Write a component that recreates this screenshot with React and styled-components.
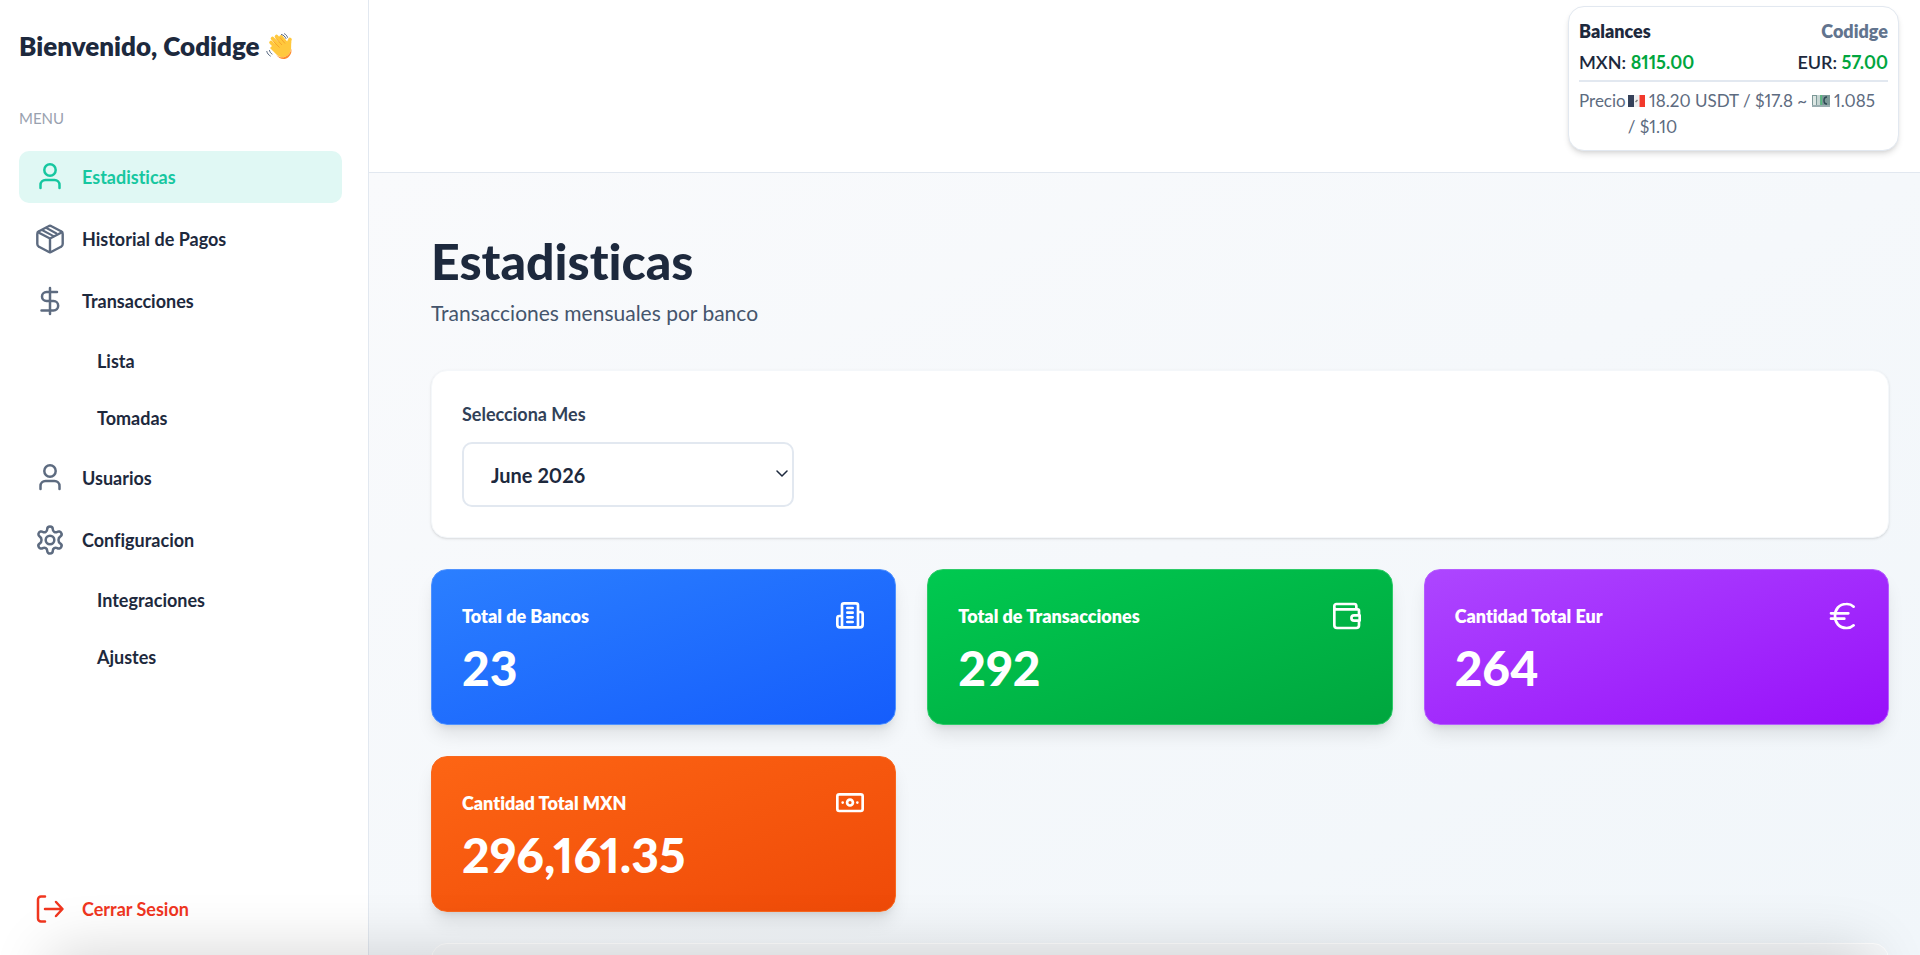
import React from "react";
import styled, { createGlobalStyle } from "styled-components";

const Global = createGlobalStyle`
  *, *::before, *::after { box-sizing: border-box; }
  body {
    margin: 0;
    font-family: Lato, "Liberation Sans", sans-serif;
    font-variant-ligatures: no-common-ligatures;
    font-variant-numeric: proportional-nums;
    color: #1d293d;
    background: #fff;
  }
  h1, h2, p, ul { margin: 0; padding: 0; }
  ul { list-style: none; }
  button, select { font-family: inherit; font-variant: inherit; }
`;

const Shell = styled.div`
  display: flex;
  height: 100vh;
  overflow: hidden;
`;

const Sidebar = styled.aside`
  flex: 0 0 369px;
  display: flex;
  flex-direction: column;
  padding: 24px 26px 20px 19px;
  border-right: 1px solid #e2e8f0;
  background: #fff;
`;

const Welcome = styled.h2`
  display: flex;
  align-items: center;
  gap: 6px;
  font-size: 26px;
  line-height: 44px;
  font-weight: 800;
  color: #1d293d;
  white-space: nowrap;
`;

const MenuTitle = styled.p`
  margin-top: 40px;
  font-size: 15px;
  line-height: 20px;
  color: #99a1af;
`;

const Nav = styled.nav`
  display: flex;
  flex: 1;
  flex-direction: column;
  margin-top: 23px;
`;

const NavList = styled.ul`
  display: flex;
  flex-direction: column;
  gap: 10px;
`;

const SubList = styled.ul`
  display: flex;
  flex-direction: column;
  gap: 9px;
  margin-top: 10px;
  padding-left: 62px;
`;

const NavLink = styled.a`
  display: flex;
  align-items: center;
  gap: 17px;
  height: 52px;
  padding: 0 16px;
  border-radius: 10px;
  font-size: 18px;
  line-height: 28px;
  font-weight: 700;
  text-decoration: none;
  color: ${(p) => (p.$active ? "#16c7a0" : "#1d293d")};
  background: ${(p) => (p.$active ? "#e0f8f4" : "transparent")};
  svg { color: ${(p) => (p.$active ? "#16c7a0" : "#5d6b80")}; }
`;

const SubLink = styled.a`
  display: block;
  padding: 10px 16px;
  font-size: 18px;
  line-height: 28px;
  font-weight: 700;
  text-decoration: none;
  color: #1d293d;
`;

const Logout = styled.button`
  display: flex;
  align-items: center;
  gap: 17px;
  height: 52px;
  margin-top: auto;
  padding: 0 16px;
  border: 0;
  background: none;
  font-size: 18px;
  line-height: 28px;
  font-weight: 700;
  color: #f0361f;
`;

const Column = styled.div`
  flex: 1;
  min-width: 0;
  display: flex;
  flex-direction: column;
`;

const Topbar = styled.header`
  display: flex;
  flex-shrink: 0;
  justify-content: flex-end;
  align-items: flex-start;
  height: 173px;
  padding: 6px 21px 0;
  border-bottom: 1px solid #e2e8f0;
  background: #fff;
`;

const BalanceCard = styled.section`
  width: 331px;
  padding: 11px 10px 10px;
  border: 1px solid #e2e8f0;
  border-radius: 16px;
  background: #fff;
  box-shadow: 0 4px 6px -1px rgba(0, 0, 0, 0.12), 0 2px 4px -2px rgba(0, 0, 0, 0.1);
  font-size: 18px;
  line-height: 26px;
`;

const BalanceRow = styled.div`
  display: flex;
  justify-content: space-between;
  padding-bottom: 5px;
  font-weight: ${(p) => (p.$strong ? 800 : 600)};
`;

const Owner = styled.span`
  font-weight: 800;
  color: #62748e;
`;

const Amount = styled.span`
  font-weight: 700;
  color: #00a63e;
`;

const Prices = styled.div`
  display: flex;
  gap: 2px;
  padding-top: 6px;
  border-top: 2px solid #e2e8f0;
  font-size: 17px;
  color: #5d6b80;
`;

const Unbroken = styled.span`
  white-space: nowrap;
`;

const Main = styled.main`
  flex: 1;
  min-height: 0;
  overflow: hidden;
  padding: 60px 31px 0 62px;
  background: linear-gradient(to bottom right, #f9fafc, #f1f6fa);
`;

const Title = styled.h1`
  font-size: 50px;
  line-height: 56px;
  font-weight: 900;
`;

const Subtitle = styled.p`
  margin-top: 8px;
  font-size: 21px;
  line-height: 32px;
  color: #45556c;
`;

const Panel = styled.section`
  margin-top: 41px;
  padding: 30px;
  border: 1px solid #f4f7fa;
  border-radius: 16px;
  background: #fff;
  box-shadow: 0 1px 3px rgba(0, 0, 0, 0.1), 0 1px 2px -1px rgba(0, 0, 0, 0.1);
`;

const FieldLabel = styled.label`
  display: block;
  font-size: 18px;
  line-height: 26px;
  font-weight: 700;
  color: #314158;
`;

const SelectWrap = styled.div`
  position: relative;
  width: 332px;
  margin-top: 15px;
  svg { position: absolute; right: 6px; top: 26px; pointer-events: none; }
`;

const Select = styled.select`
  appearance: none;
  display: block;
  width: 100%;
  height: 65px;
  padding: 0 27px;
  border: 2px solid #e2e8f0;
  border-radius: 10px;
  background: #fff;
  font-size: 20px;
  line-height: 28px;
  font-weight: 700;
  color: #1d293d;
`;

const Grid = styled.div`
  display: grid;
  grid-template-columns: repeat(3, minmax(0, 1fr));
  gap: 31px;
  margin-top: 31px;
`;

const StatCard = styled.article`
  padding: 30px 29px 28px 30px;
  border: 1px solid ${(p) => p.$edge};
  border-radius: 16px;
  background: linear-gradient(to bottom right, ${(p) => p.$from}, ${(p) => p.$to});
  box-shadow: 0 12px 18px -3px rgba(0, 0, 0, 0.1), 0 5px 7px -4px rgba(0, 0, 0, 0.1);
  color: #fff;
`;

const StatHead = styled.div`
  display: flex;
  justify-content: space-between;
  align-items: center;
  height: 32px;
  font-size: 18px;
  line-height: 26px;
  font-weight: 800;
`;

const StatValue = styled.p`
  margin-top: 8px;
  font-size: 48px;
  line-height: 56px;
  font-weight: 900;
`;

const NextPanel = styled.section`
  height: 80px;
  margin-top: 31px;
  border: 1px solid #fff;
  border-radius: 16px;
  background: #f5f7f9;
`;

const BottomFade = styled.div`
  position: fixed;
  left: 0;
  right: 0;
  bottom: 0;
  height: 80px;
  overflow: hidden;
  pointer-events: none;
  &::after {
    content: "";
    position: absolute;
    left: 70px;
    right: 70px;
    top: 96px;
    height: 60px;
    box-shadow: 0 0 60px 20px rgba(0, 0, 0, 0.16);
  }
`;

function Line({ size = 32, width = 2, box = 24, children }) {
  return (
    <svg width={size} height={size} viewBox={`0 0 ${box} ${box}`} fill="none" stroke="currentColor" strokeWidth={width} strokeLinecap="round" strokeLinejoin="round" aria-hidden="true">
      {children}
    </svg>
  );
}

const UserIcon = () => (
  <Line size={30} box={30} width={2.5}>
    <circle cx="15" cy="8" r="5.7" />
    <path d="M5.500 26v-3a5 5 0 0 1 5-5h9a5 5 0 0 1 5 5v3" />
  </Line>
);
const BoxIcon = () => (
  <Line size={30} box={30} width={2.4}>
    <path d="M13.500 2.200 4 7.200a3 3 0 0 0-1.700 2.700v10.200a3 3 0 0 0 1.700 2.700l9.500 5a3 3 0 0 0 3 0l9.500-5a3 3 0 0 0 1.700-2.700V9.900A3 3 0 0 0 26 7.200l-9.500-5a3 3 0 0 0-3 0Z" />
    <path d="m3 8.200 12 6.300 12-6.300M15 14.500V28" />
    <path d="m7 6 11.500 6.200M11.500 4l10 5.500" strokeWidth="2" />
  </Line>
);
const DollarIcon = () => (
  <Line size={30} box={30} width={2.5}>
    <path d="M15 2v26M22 6h-10.500a4.500 4.500 0 0 0 0 9h7a4.700 4.700 0 0 1 0 9.400H6.500" />
  </Line>
);
const GearIcon = () => (
  <Line size={30} box={30} width={2.5}>
    <circle cx="15" cy="15" r="4.300" />
    <path d="M12.200 4.200a2.800 2.800 0 0 1 5.600 0c0 2.500 2.300 3.900 4.500 2.700a2.800 2.800 0 0 1 3.900 1c.8 1.300.3 2.900-1 3.700-2.300 1.500-2.300 5.300 0 6.800 1.300.8 1.800 2.400 1 3.700a2.800 2.800 0 0 1-3.900 1c-2.200-1.200-4.500.2-4.500 2.700a2.800 2.800 0 0 1-5.600 0c0-2.500-2.300-3.900-4.500-2.700a2.800 2.800 0 0 1-3.900-1c-.8-1.300-.3-2.900 1-3.700 2.300-1.500 2.300-5.300 0-6.800-1.300-.8-1.800-2.400-1-3.700a2.800 2.800 0 0 1 3.900-1c2.200 1.200 4.500-.2 4.500-2.700Z" />
  </Line>
);
const LogoutIcon = () => (
  <Line size={30} box={30} width={2.5}>
    <path d="M10 2.500H6a3 3 0 0 0-3 3v19a3 3 0 0 0 3 3h4M10 15h17M21 8l6.500 7-6.500 7" />
  </Line>
);
const BuildingIcon = () => (
  <Line>
    <path d="M6 20.500V4a1.500 1.500 0 0 1 1.500-1.500h9A1.500 1.500 0 0 1 18 4v16.500M6 12H4a1.500 1.500 0 0 0-1.500 1.500v5A2 2 0 0 0 4.500 20.500h15a2 2 0 0 0 2-2v-8a1.500 1.500 0 0 0-1.500-1.500h-2M10 6h4M10 9.500h4M10 13h4M10 16.500h4" />
  </Line>
);
const WalletIcon = () => (
  <Line>
    <path d="M19 7V4.500A1.500 1.500 0 0 0 17.500 3H4a1.500 1.500 0 0 0-1.500 1.500V19a2 2 0 0 0 2 2H19a2 2 0 0 0 2-2v-3.500M2.500 5.500A1.500 1.500 0 0 0 4 7h16a1 1 0 0 1 1 1v3.500M21.500 11.500h-4.200a2 2 0 0 0 0 4h4.200Z" />
  </Line>
);
const EuroIcon = () => (
  <Line>
    <path d="M20 5a7.500 7.500 0 0 0-5.500-2C9 3 6 7 6 12s3 9 8.500 9a7.500 7.500 0 0 0 5.500-2M3 10h13M3 14h10" />
  </Line>
);
const CashIcon = () => (
  <Line>
    <rect x="2.500" y="5.500" width="19" height="12.500" rx="1.500" />
    <circle cx="12" cy="11.700" r="2.200" />
    <path d="M6.500 11.700h.01M17.500 11.700h.01" />
  </Line>
);

const WaveHand = () => (
  <svg width="27" height="27" viewBox="0 0 27 27" aria-hidden="true">
    <g fill="none" stroke="#ffc83d" strokeWidth="3.600" strokeLinecap="round">
      <path d="m5 9.500 8 8M6.500 5.500l9 9M10.500 3.500l8.500 9.500M15 4l5 6" />
      <path d="M21.500 14c.5-3 1-5 2.500-7.500" />
    </g>
    <path d="M9 10 17 7l5 6 1.500-5 2 .5c-1 4 1 9-3 13-4 4-9 3-12 0l-6.500-6.500 2-2Z" fill="#ffc83d" />
    <path d="M10 21.500c4 4 9 3.500 12.500 0 2-2 2.500-4 2.600-6 .9 3 0 6-2.500 8.500-4 3.500-9 2.500-12.600-2.500Z" fill="#ff8b2b" />
    <path d="m7.500 8.500 6 6M10 5.500l6 6.500M14 4.500l5 6" stroke="#f59a28" strokeWidth=".8" fill="none" />
    <path d="M15.500 1.500c2 .5 3.500 2 4.500 4M18.500.800c1.500.7 2.500 2 3 3.500M.800 18.500c.5 2 1.800 3.500 3.500 4.500M3.500 17.500c.3 1.500 1.200 2.700 2.500 3.500" stroke="#50617a" strokeWidth="1" fill="none" strokeLinecap="round" />
  </svg>
);

const FlagIcon = () => (
  <svg width="17" height="12" viewBox="0 0 17 12" role="img" aria-label="MX">
    <path d="M0 0h6v12H0z" fill="#35415a" />
    <path d="M6 0h5.500v12H6z" fill="#eef0f1" />
    <path d="M11.500 0H17v12h-5.500z" fill="#f2392c" />
    <path d="m7.500 7 2-2" stroke="#777" strokeWidth="1.500" />
  </svg>
);

const NoteIcon = () => (
  <svg width="18" height="12" viewBox="0 0 18 12" role="img" aria-label="EUR">
    <path d="M0 0h18v12H0z" fill="#7c9897" />
    <path d="M1 1h3v9H1z" fill="#dce6e3" />
    <path d="M5 0h3v11H5z" fill="#c7d6d3" />
    <path d="M8.500 0h1.500v12H8.500z" fill="#54bd7d" />
    <path d="M15 2c-4 0-4 7 0 7" fill="none" stroke="#2e4854" strokeWidth="1.500" />
    <path d="M0 11h18" stroke="#9aadb0" strokeWidth="2" />
  </svg>
);

const menu = [
  { label: "Estadisticas", Icon: UserIcon, active: true },
  { label: "Historial de Pagos", Icon: BoxIcon },
  { label: "Transacciones", Icon: DollarIcon, items: ["Lista", "Tomadas"] },
  { label: "Usuarios", Icon: UserIcon },
  { label: "Configuracion", Icon: GearIcon, items: ["Integraciones", "Ajustes"] },
];

const stats = [
  { label: "Total de Bancos", value: "23", Icon: BuildingIcon, from: "#2b7fff", to: "#155dfc", edge: "#4f92ff" },
  { label: "Total de Transacciones", value: "292", Icon: WalletIcon, from: "#00c950", to: "#00a63e", edge: "#2dcb68" },
  { label: "Cantidad Total Eur", value: "264", Icon: EuroIcon, from: "#ad46ff", to: "#9810fa", edge: "#b55cff" },
  { label: "Cantidad Total MXN", value: "296,161.35", Icon: CashIcon, from: "#fd6514", to: "#ef4a08", edge: "#f9681f" },
];

export default function App() {
  return (
    <>
      <Global />
      <Shell>
        <Sidebar>
          <Welcome>
            <span>Bienvenido, Codidge</span>
            <WaveHand />
          </Welcome>
          <MenuTitle>MENU</MenuTitle>
          <Nav>
            <NavList>
              {menu.map(({ label, Icon, active, items }) => (
                <li key={label}>
                  <NavLink href="#" $active={active}>
                    <Icon />
                    {label}
                  </NavLink>
                  {items && (
                    <SubList>
                      {items.map((item) => (
                        <li key={item}><SubLink href="#">{item}</SubLink></li>
                      ))}
                    </SubList>
                  )}
                </li>
              ))}
            </NavList>
            <Logout type="button"><LogoutIcon />Cerrar Sesion</Logout>
          </Nav>
        </Sidebar>
        <Column>
          <Topbar>
            <BalanceCard>
              <BalanceRow $strong><span>Balances</span><Owner>Codidge</Owner></BalanceRow>
              <BalanceRow>
                <span>MXN: <Amount>8115.00</Amount></span>
                <span>EUR: <Amount>57.00</Amount></span>
              </BalanceRow>
              <Prices>
                <span>Precio</span>
                <span>
                  <FlagIcon /> 18.20 USDT / $17.8 ~ <NoteIcon /> 1.085 <Unbroken>/ $1.10</Unbroken>
                </span>
              </Prices>
            </BalanceCard>
          </Topbar>
          <Main>
            <Title>Estadisticas</Title>
            <Subtitle>Transacciones mensuales por banco</Subtitle>
            <Panel>
              <FieldLabel htmlFor="month">Selecciona Mes</FieldLabel>
              <SelectWrap>
                <Select id="month" defaultValue="June 2026">
                  <option>June 2026</option>
                </Select>
                <Line size={12} box={12} width={1.5}><path d="m1 3 5 5 5-5" /></Line>
              </SelectWrap>
            </Panel>
            <Grid>
              {stats.map(({ label, value, Icon, from, to, edge }) => (
                <StatCard key={label} $from={from} $to={to} $edge={edge}>
                  <StatHead>{label}<Icon /></StatHead>
                  <StatValue>{value}</StatValue>
                </StatCard>
              ))}
            </Grid>
            <NextPanel />
          </Main>
        </Column>
      </Shell>
      <BottomFade />
    </>
  );
}
